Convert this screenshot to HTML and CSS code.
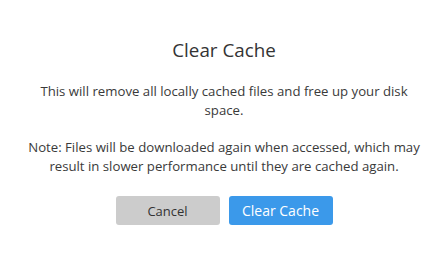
FILE: index.html
```html
<!DOCTYPE html>
<html>
<head>
<meta charset="utf-8">
<link rel="stylesheet" href="styles.css">
</head>
<body>
<div class="dialog">
  <h1 class="title">Clear Cache</h1>
  <p class="text">This will remove all locally cached files and free up your disk space.</p>
  <p class="text">Note: Files will be downloaded again when accessed, which may result in slower performance until they are cached again.</p>
  <div class="actions">
    <button class="btn btn-cancel">Cancel</button>
    <button class="btn btn-primary">Clear Cache</button>
  </div>
</div>
</body>
</html>
```
FILE: styles.css
```css
html, body {
  margin: 0;
  padding: 0;
  background: #ffffff;
}
body {
  font-family: "Open Sans", "Noto Sans", sans-serif;
  color: #333333;
}
.dialog {
  width: 400px;
  margin: 0 auto;
  padding-top: 38px;
  display: flex;
  flex-direction: column;
  align-items: center;
  text-align: center;
}
.title {
  margin: 0;
  font-size: 18.8px;
  line-height: 24px;
  font-weight: 400;
  color: #333333;
}
.text {
  margin: 20px 0 0;
  font-size: 13.2px;
  line-height: 19px;
  color: #3a3a3a;
}
.text + .text {
  margin-top: 18px;
}
.actions {
  margin-top: 20px;
  display: flex;
  gap: 9px;
}
.btn {
  width: 104px;
  height: 29px;
  border: none;
  border-radius: 3px;
  font-family: inherit;
  font-size: 13px;
  padding: 0;
}
.btn-cancel {
  background: #cccccc;
  color: #333333;
}
.btn-primary {
  background: #3b99ea;
  color: #ffffff;
  font-size: 14px;
}
```
